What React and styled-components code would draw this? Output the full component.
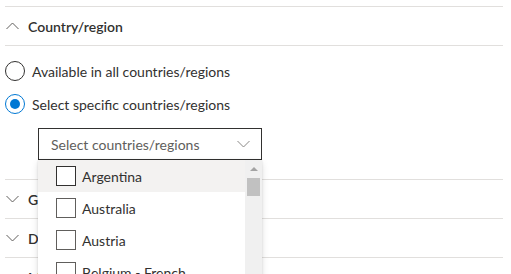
import React from "react";
import styled, { createGlobalStyle } from "styled-components";

const Global = createGlobalStyle`
  html, body { margin: 0; padding: 0; background: #fff; }
  body { font-family: "Segoe UI", Lato, "Noto Sans", sans-serif; color: #323130; }
  * { box-sizing: border-box; }
`;

const Page = styled.div`
  width: 511px;
  height: 274px;
  overflow: hidden;
  padding: 6px 8px 0 5px;
`;

const Section = styled.section`
  border-top: 1px solid #e1dfdd;
  position: relative;
`;

const Header = styled.div`
  height: 38px;
  display: flex;
  align-items: center;
  gap: 9px;
  padding-left: 1px;
  font-size: 14px;
  font-weight: 600;
  color: #323130;
`;

const Body = styled.div`
  border-top: 1px solid #e1dfdd;
  padding: 15px 0 19px 0;
  display: flex;
  flex-direction: column;
  gap: 13px;
  position: relative;
`;

const RadioRow = styled.label`
  display: flex;
  align-items: center;
  gap: 7px;
  font-size: 14px;
  color: #323130;
  height: 20px;
`;

const RadioCircle = styled.span`
  width: 20px;
  height: 20px;
  border-radius: 50%;
  border: 1px solid ${(p) => (p.$checked ? "#0078d4" : "#323130")};
  display: flex;
  align-items: center;
  justify-content: center;
  &::after {
    content: "";
    width: 10px;
    height: 10px;
    border-radius: 50%;
    background: ${(p) => (p.$checked ? "#0078d4" : "transparent")};
  }
`;

const DropWrap = styled.div`
  position: relative;
  margin-left: 33px;
  margin-top: 1px;
  width: 224px;
`;

const Dropdown = styled.div`
  height: 32px;
  border: 1px solid #323130;
  display: flex;
  align-items: center;
  justify-content: space-between;
  padding: 0 11px 0 12px;
  font-size: 14px;
  color: #605e5c;
  background: #fff;
`;

const Listbox = styled.div`
  position: absolute;
  top: 32px;
  left: 0;
  width: 224px;
  height: 130px;
  background: #fff;
  box-shadow: 0 3px 7px rgba(0, 0, 0, 0.13), 0 0 2px rgba(0, 0, 0, 0.11);
  display: flex;
  z-index: 5;
  overflow: hidden;
`;

const Options = styled.div`
  flex: 1;
  display: flex;
  flex-direction: column;
`;

const Option = styled.div`
  height: 32px;
  flex: none;
  display: flex;
  align-items: center;
  gap: 6px;
  padding-left: 18px;
  font-size: 14px;
  color: #323130;
  background: ${(p) => (p.$hover ? "#f3f2f1" : "#fff")};
`;

const Box = styled.span`
  width: 20px;
  height: 20px;
  border: 1px solid ${(p) => (p.$hover ? "#323130" : "#605e5c")};
  background: #fff;
  flex: none;
`;

const Scrollbar = styled.div`
  width: 17px;
  background: #f0f0f0;
  display: flex;
  flex-direction: column;
  align-items: center;
  padding-top: 7px;
`;

const Arrow = styled.div`
  width: 0;
  height: 0;
  border-left: 4px solid transparent;
  border-right: 4px solid transparent;
  border-bottom: 4px solid #a3a3a3;
`;

const Thumb = styled.div`
  margin-top: 7px;
  width: 13px;
  height: 18px;
  background: #c1c1c1;
`;

const Chevron = ({ up, color = "#605e5c" }) => (
  <svg width="13" height="8" viewBox="0 0 13 8">
    <polyline
      points={up ? "0.5,7 6.5,1 12.5,7" : "0.5,1 6.5,7 12.5,1"}
      fill="none"
      stroke={color}
      strokeWidth="1"
    />
  </svg>
);

const countries = ["Argentina", "Australia", "Austria", "Belgium - French"];

export default function App() {
  return (
    <>
      <Global />
      <Page>
        <Section>
          <Header>
            <Chevron up />
            Country/region
          </Header>
          <Body>
            <RadioRow>
              <RadioCircle />
              Available in all countries/regions
            </RadioRow>
            <RadioRow>
              <RadioCircle $checked />
              Select specific countries/regions
            </RadioRow>
            <DropWrap>
              <Dropdown>
                Select countries/regions
                <Chevron color="#8a8886" />
              </Dropdown>
              <Listbox>
                <Options>
                  {countries.map((c, i) => (
                    <Option key={c} $hover={i === 0}>
                      <Box $hover={i === 0} />
                      {c}
                    </Option>
                  ))}
                </Options>
                <Scrollbar>
                  <Arrow />
                  <Thumb />
                </Scrollbar>
              </Listbox>
            </DropWrap>
          </Body>
        </Section>
        <Section>
          <Header>
            <Chevron />
            Geography
          </Header>
        </Section>
        <Section>
          <Header>
            <Chevron />
            Details
          </Header>
        </Section>
        <Section>
          <Header>
            <Chevron />
            Markets
          </Header>
        </Section>
      </Page>
    </>
  );
}
